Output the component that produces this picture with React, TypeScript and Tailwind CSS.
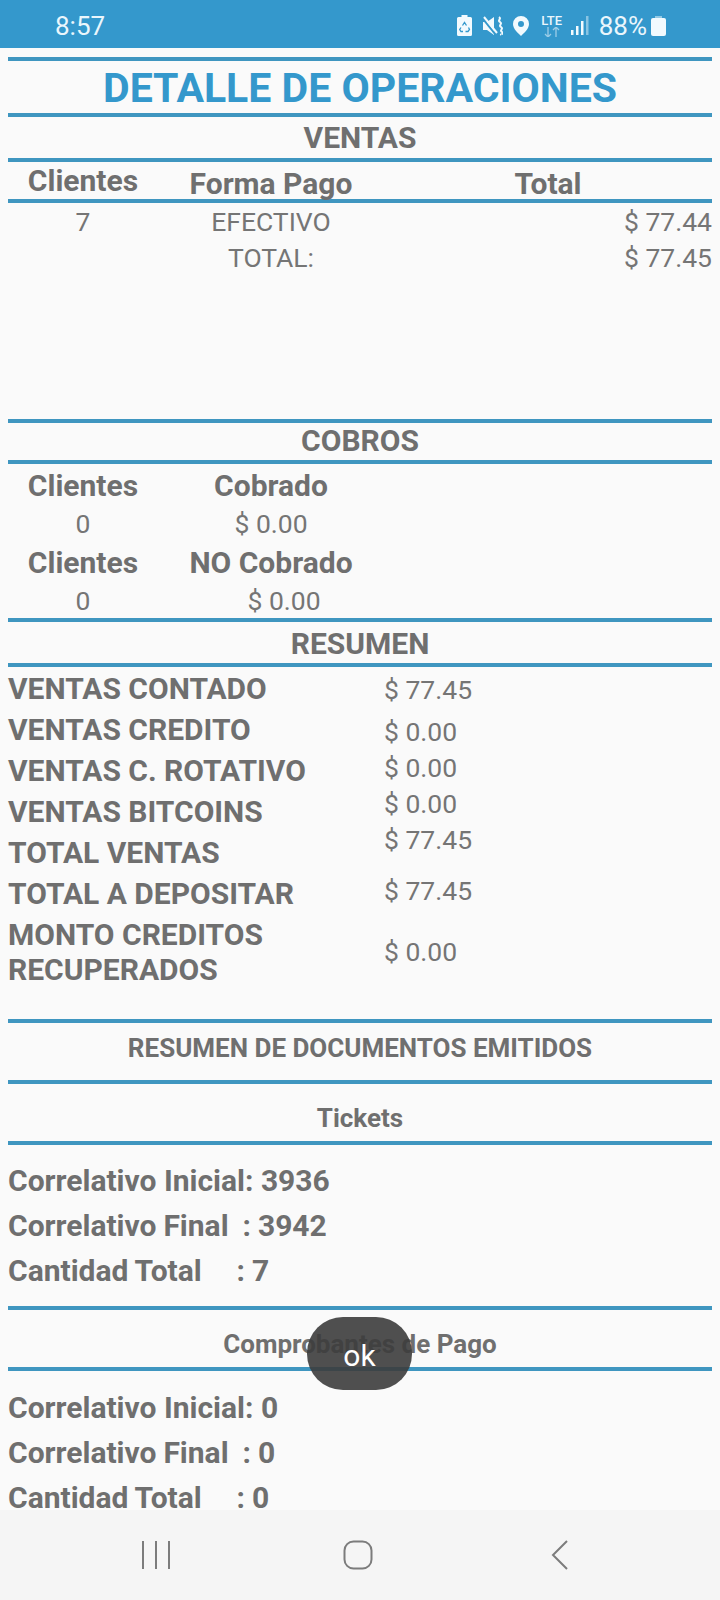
const rule = "h-1 bg-[#3f96c0] mx-2 shrink-0";

function Rule({ className = "" }: { className?: string }) {
  return <div className={`${rule} ${className}`} />;
}

function StatusBar() {
  return (
    <div className="h-12 bg-[#3498cc] shrink-0 flex items-center text-[#eaf6fc] pl-[55px] pt-[3px]">
      <span className="text-[26px] leading-none">8:57</span>
      <div className="ml-auto mr-[54px] flex items-center">
        {/* bateria con reciclaje */}
        <svg width="15" height="21" viewBox="0 0 15 21" className="mr-[11px]">
          <path d="M4.500 0h6v2h3A1.500 1.500 0 0 1 15 3.500v16a1.500 1.500 0 0 1-1.500 1.500h-12A1.500 1.500 0 0 1 0 19.500v-16A1.500 1.500 0 0 1 1.500 2h3z" fill="#f2fafe" />
          <path d="M5.500 10.500L7.500 7.500l2 3M11.500 12.500l1 2-1.500 2H8.500M6 16.500H4l-1.300-2 1.300-2" stroke="#3498cc" strokeWidth="1.300" fill="none" />
        </svg>
        {/* silencio con vibracion */}
        <svg width="20" height="20" viewBox="0 0 20 20" className="mr-[10px]">
          <path d="M0 6h4l7-5v18l-7-5H0z" fill="#f2fafe" />
          <path d="M0 3l13 16" stroke="#3498cc" strokeWidth="2" />
          <path d="M1 1l13 16" stroke="#f2fafe" strokeWidth="2" />
          <path d="M16 1c3 2-2 3 1 5s-2 3 1 5-2 3 1 5-2 2-1 3" stroke="#f2fafe" strokeWidth="2" fill="none" />
        </svg>
        {/* ubicacion */}
        <svg width="16" height="20" viewBox="0 0 16 20" className="mr-3">
          <path fillRule="evenodd" d="M8 0a8 8 0 0 1 8 8c0 5-5 9-8 12-3-3-8-7-8-12a8 8 0 0 1 8-8zm0 5a3 3 0 1 0 0 6 3 3 0 0 0 0-6z" fill="#f2fafe" />
        </svg>
        {/* LTE */}
        <div className="w-[22px] h-[22px] mr-2 flex flex-col items-center">
          <span className="text-[13px] leading-[12px] font-medium">LTE</span>
          <svg width="20" height="10" viewBox="0 0 20 10">
            <path d="M6 0v10M3 7l3 3 3-3" stroke="#f2fafe" strokeOpacity="0.55" strokeWidth="1.300" fill="none" />
            <path d="M14 10V0M11 3l3-3 3 3" stroke="#f2fafe" strokeOpacity="0.55" strokeWidth="1.300" fill="none" />
          </svg>
        </div>
        {/* senal */}
        <svg width="18" height="19" viewBox="0 0 18 19" className="mr-[10px]">
          <rect x="0" y="14" width="2.500" height="5" fill="#f2fafe" />
          <rect x="5" y="10" width="2.500" height="9" fill="#f2fafe" />
          <rect x="10" y="5" width="2.500" height="14" fill="#f2fafe" />
          <rect x="15" y="0" width="2.500" height="19" fill="#f2fafe" fillOpacity="0.45" />
        </svg>
        <span className="text-[26px] leading-none">88%</span>
        {/* bateria */}
        <svg width="15" height="20" viewBox="0 0 15 20" className="ml-1">
          <path d="M4 0h7v2H4z" fill="#f2fafe" fillOpacity="0.5" />
          <rect x="0" y="2" width="15" height="18" rx="2" fill="#f2fafe" />
        </svg>
      </div>
    </div>
  );
}

function NavBar() {
  return (
    <div className="h-[90px] bg-[#f5f5f5] shrink-0 relative">
      <div className="flex items-center h-full">
        <svg width="28" height="30" viewBox="0 0 28 30" className="ml-[142px]">
          <path d="M1 1v28M14 1v28M27 1v28" stroke="#7c7c7c" strokeWidth="2" />
        </svg>
        <svg width="30" height="30" viewBox="0 0 30 30" className="ml-[173px]">
          <rect x="1.500" y="1.500" width="27" height="27" rx="9" stroke="#7c7c7c" strokeWidth="2" fill="none" />
        </svg>
        <svg width="18" height="30" viewBox="0 0 18 30" className="ml-[178px]">
          <path d="M16 1L2 15l14 14" stroke="#7c7c7c" strokeWidth="2" fill="none" />
        </svg>
      </div>
    </div>
  );
}

const resumenLabels = [
  "VENTAS CONTADO",
  "VENTAS CREDITO",
  "VENTAS C. ROTATIVO",
  "VENTAS BITCOINS",
  "TOTAL VENTAS",
  "TOTAL A DEPOSITAR",
];

export default function App() {
  return (
    <div className="relative h-[1600px] flex flex-col overflow-hidden bg-[#fafafa] text-[#6f6f6f] font-['Roboto',sans-serif]">
      <StatusBar />

      <div className="flex-1 overflow-hidden">
        <Rule className="mt-[9px]" />
        <h1 className="h-[52px] pt-1 flex items-center justify-center text-[41px] font-bold text-[#3498cc]">DETALLE DE OPERACIONES</h1>
        <Rule />
        <div className="h-[41px] flex items-center justify-center text-[30px] font-bold">VENTAS</div>
        <Rule />
        <div className="mx-2 h-[37px] grid grid-cols-[150px_226px_1fr] text-[30px] font-bold text-center leading-none">
          <span className="pt-1">Clientes</span>
          <span className="pt-[7px]">Forma Pago</span>
          <span className="pt-[7px]">Total</span>
        </div>
        <Rule />
        <div className="mx-2 pt-px grid grid-cols-[150px_226px_1fr] auto-rows-[36px] items-center text-[26.5px] text-center text-[#757575]">
          <span>7</span>
          <span>EFECTIVO</span>
          <span className="text-right">$ 77.44</span>
          <span />
          <span>TOTAL:</span>
          <span className="text-right">$ 77.45</span>
        </div>

        <Rule className="mt-[143px]" />
        <div className="h-[37px] pb-[3px] flex items-center justify-center text-[30px] font-bold">COBROS</div>
        <Rule />
        <div className="mx-2 h-[154px] w-[376px] grid grid-cols-[150px_226px] content-start text-center">
          <span className="h-[43px] flex items-center justify-center text-[30px] font-bold">Clientes</span>
          <span className="h-[43px] flex items-center justify-center text-[30px] font-bold">Cobrado</span>
          <span className="h-[33px] flex items-center justify-center text-[26.5px] text-[#757575]">0</span>
          <span className="h-[33px] flex items-center justify-center text-[26.5px] text-[#757575]">$ 0.00</span>
          <span className="h-[45px] flex items-center justify-center text-[30px] font-bold">Clientes</span>
          <span className="h-[45px] flex items-center justify-center text-[30px] font-bold">NO Cobrado</span>
          <span className="h-[31px] flex items-center justify-center text-[26.5px] text-[#757575]">0</span>
          <span className="h-[31px] pl-[26px] flex items-center justify-center text-[26.5px] text-[#757575]">$ 0.00</span>
        </div>
        <Rule />
        <div className="h-[41px] pt-[2px] flex items-center justify-center text-[30px] font-bold">RESUMEN</div>
        <Rule />

        <div className="mx-2 h-[352px] flex">
          <div className="w-[376px] pt-px text-[30px] font-bold">
            {resumenLabels.map((label) => (
              <div key={label} className="h-[41px] flex items-center">{label}</div>
            ))}
            <div className="leading-[35px] pt-[3px]">MONTO CREDITOS<br />RECUPERADOS</div>
          </div>
          <div className="text-[26.5px] text-[#757575]">
            <div className="h-[46px] flex items-center">$ 77.45</div>
            <div className="h-[38px] flex items-center">$ 0.00</div>
            <div className="h-[34px] flex items-center">$ 0.00</div>
            <div className="h-[38px] flex items-center">$ 0.00</div>
            <div className="h-[34px] flex items-center">$ 77.45</div>
            <div className="h-[68px] flex items-center">$ 77.45</div>
            <div className="h-[54px] flex items-center">$ 0.00</div>
          </div>
        </div>

        <Rule />
        <div className="h-[57px] pb-[6px] flex items-center justify-center text-[26px] font-bold">RESUMEN DE DOCUMENTOS EMITIDOS</div>
        <Rule />
        <div className="h-[57px] pt-3 flex items-center justify-center text-[26px] font-bold">Tickets</div>
        <Rule />
        <div className="mx-2 h-[161px] pt-[13px] text-[30px] font-bold leading-[45px]">
          <div>Correlativo Inicial: 3936</div>
          <div className="whitespace-pre [word-spacing:-0.5px]">Correlativo Final  : 3942</div>
          <div className="whitespace-pre [word-spacing:-0.5px]">Cantidad Total     : 7</div>
        </div>
        <Rule />
        <div className="h-[57px] pt-3 flex items-center justify-center text-[26px] font-bold">Comprobantes de Pago</div>
        <Rule />
        <div className="mx-2 pt-[14px] text-[30px] font-bold leading-[45px]">
          <div>Correlativo Inicial: 0</div>
          <div className="whitespace-pre [word-spacing:-0.5px]">Correlativo Final  : 0</div>
          <div className="whitespace-pre [word-spacing:-0.5px]">Cantidad Total     : 0</div>
        </div>
      </div>

      <NavBar />

      {/* toast */}
      <div className="absolute left-[307px] top-[1317px] w-[105px] h-[73px] pt-1 rounded-[36px] bg-[#3c3c3c]/90 text-white text-[30px] flex items-center justify-center">ok</div>
    </div>
  );
}
